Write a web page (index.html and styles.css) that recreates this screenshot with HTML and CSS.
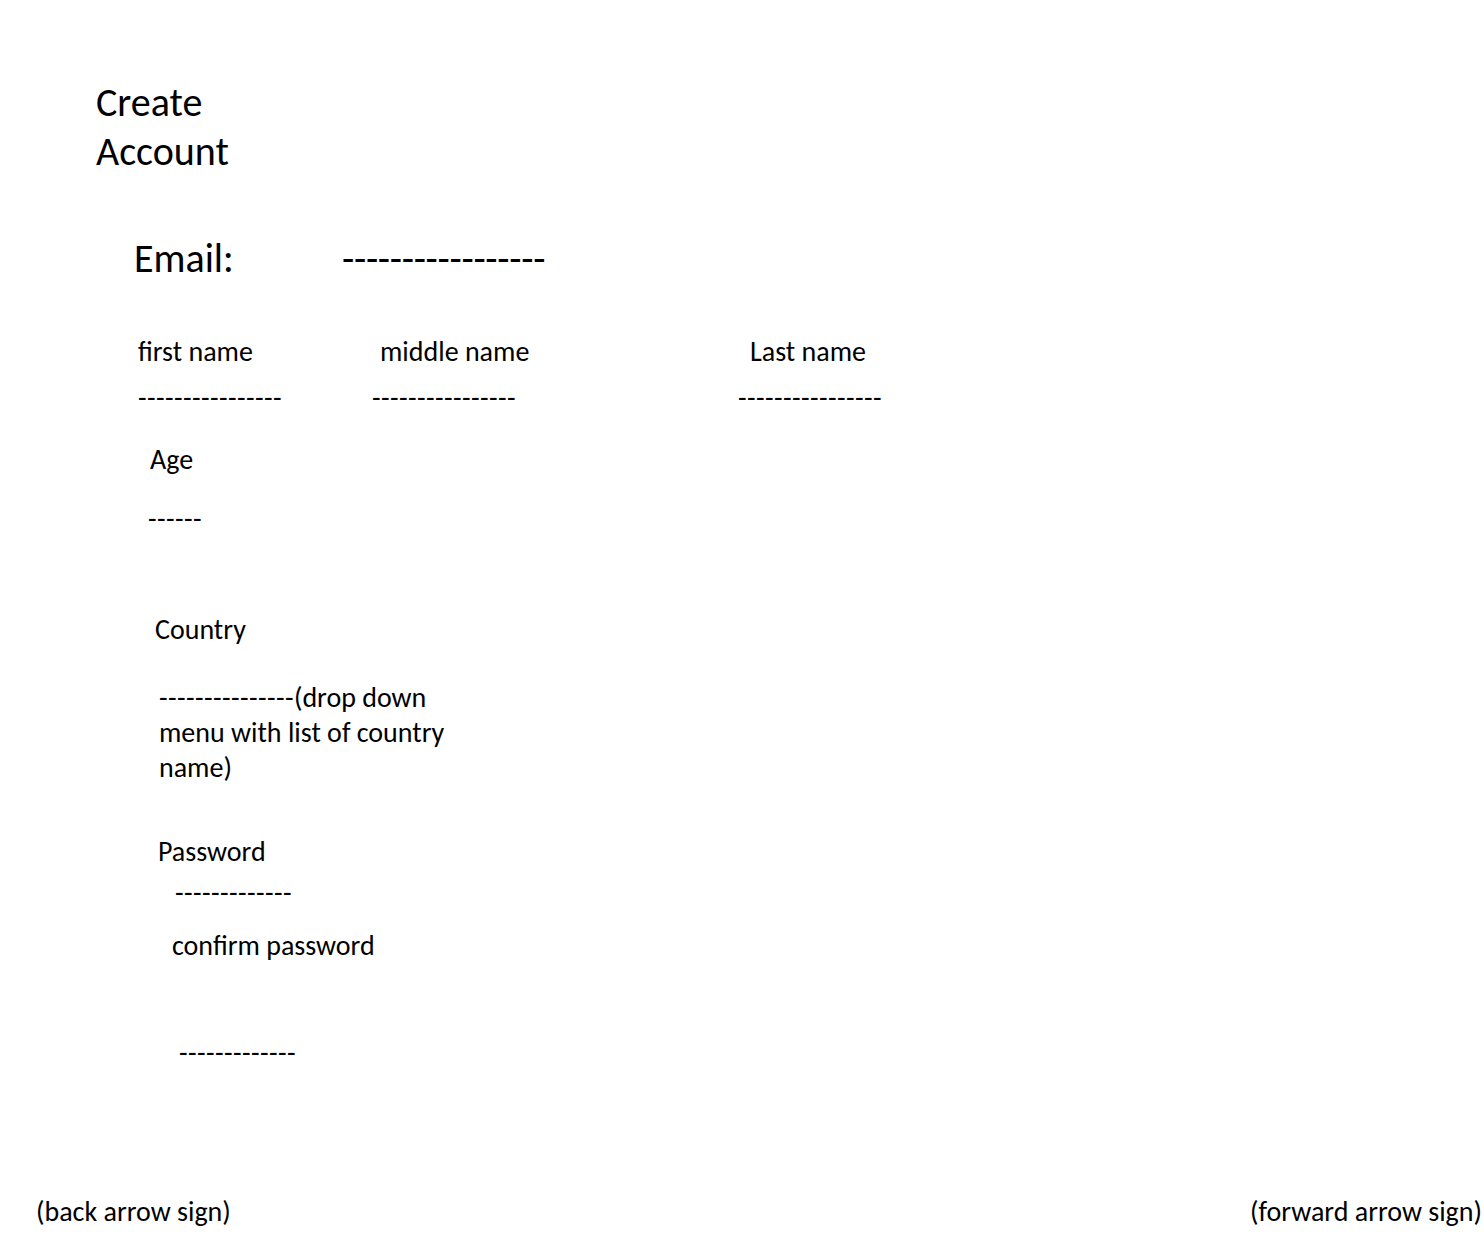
FILE: index.html
```html
<!DOCTYPE html>
<html lang="en">
<head>
<meta charset="utf-8">
<title>Create Account</title>
<link rel="stylesheet" href="styles.css">
</head>
<body>
<main class="page">
  <h1 class="title">Create<br>Account</h1>

  <div class="email-row">
    <span class="email-label">Email:</span>
    <span class="email-line">-----------------</span>
  </div>

  <div class="names">
    <div class="label col-first">first name</div>
    <div class="label col-middle">middle name</div>
    <div class="label col-last">Last name</div>
    <div class="dashes col-first-d">----------------</div>
    <div class="dashes col-middle-d">----------------</div>
    <div class="dashes col-last-d">----------------</div>
  </div>

  <div class="label age-label">Age</div>
  <div class="dashes age-line">------</div>

  <div class="label country-label">Country</div>
  <div class="label country-line"><span class="dash-run">---------------</span>(drop down<br>menu with list of country<br>name)</div>

  <div class="label password-label">Password</div>
  <div class="dashes password-line">-------------</div>

  <div class="label confirm-label">confirm password</div>
  <div class="dashes confirm-line">-------------</div>

  <footer class="nav">
    <span class="nav-back">(back arrow sign)</span>
    <span class="nav-forward">(forward arrow sign)</span>
  </footer>
</main>
</body>
</html>
```

FILE: styles.css
```css
html, body {
  margin: 0;
  padding: 0;
  background: #ffffff;
}

body {
  color: #000000;
  font-family: Carlito, Lato, "Noto Sans", sans-serif;
}

.page {
  width: 1484px;
  height: 1244px;
  box-sizing: border-box;
  padding-top: 78px;
  overflow: hidden;
}

.title {
  margin: 0 0 0 96px;
  font-size: 40px;
  line-height: 49px;
  font-weight: normal;
}

.email-row {
  display: flex;
  margin: 58px 0 0 134px;
  font-size: 40px;
  line-height: 50px;
}

.email-label {
  width: 208px;
}

.email-line {
  letter-spacing: -0.3px;
}

.label,
.dashes {
  font-size: 28px;
  line-height: 35px;
}

.dashes,
.dash-run {
  letter-spacing: 0.42px;
}

.names {
  display: grid;
  grid-template-columns: 234px 366px auto;
  margin: 50px 0 0 138px;
  row-gap: 11px;
}

.col-middle { padding-left: 8px; }
.col-last { padding-left: 12px; }

.age-label { margin: 27px 0 0 150px; }
.age-line { margin: 24px 0 0 148px; }

.country-label { margin: 76px 0 0 155px; }
.country-line { margin: 33px 0 0 159px; }

.password-label { margin: 49px 0 0 158px; }
.password-line { margin: 6px 0 0 175px; }

.confirm-label { margin: 18px 0 0 172px; }
.confirm-line { margin: 72px 0 0 179px; }

.nav {
  display: flex;
  justify-content: space-between;
  margin: 124px 2px 0 36px;
  font-size: 28px;
  line-height: 35px;
}
```
